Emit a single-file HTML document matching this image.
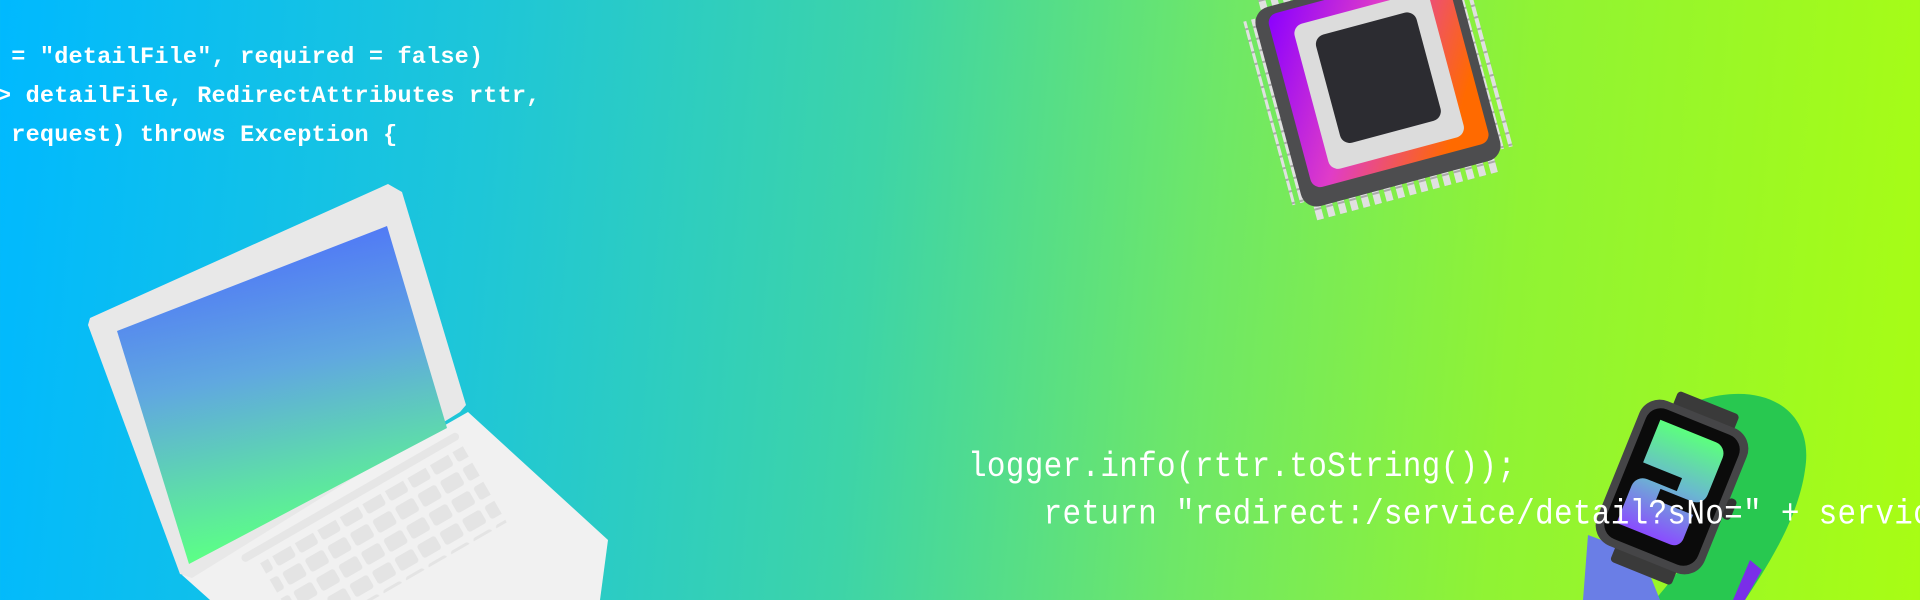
<!DOCTYPE html>
<html><head><meta charset="utf-8"><style>
html,body{margin:0;padding:0;overflow:hidden;width:1920px;height:600px}
body{position:relative;
background:linear-gradient(95deg,#00b9ff 0%,#1ec6d8 25%,#3dd4a8 45%,#6ee768 62%,#90f334 78%,#a8fd14 100%);}
.code{position:absolute;color:#fff;font-family:"Liberation Mono",monospace;white-space:pre;}
.top{font-weight:bold;font-size:23.5px;line-height:39px;left:-3px;top:38px;letter-spacing:0.2px}
.bot{font-size:31px;line-height:41px;left:968px;top:444px;transform:scaleY(1.15);transform-origin:0 0;letter-spacing:0.3px}
svg{position:absolute;left:0;top:0}
</style></head><body>
<svg width="1920" height="600" viewBox="0 0 1920 600">
<defs>
<linearGradient id="scr" x1="0" y1="0" x2="0.2" y2="1"><stop offset="0" stop-color="#4a66ff"/><stop offset="0.5" stop-color="#60a8e0"/><stop offset="1" stop-color="#5cff86"/></linearGradient>
<linearGradient id="chipc" x1="0" y1="0" x2="1" y2="0.6"><stop offset="0" stop-color="#8a00ff"/><stop offset="0.5" stop-color="#e03cc8"/><stop offset="1" stop-color="#ff6a00"/></linearGradient>
<linearGradient id="wscr" x1="0" y1="0" x2="0" y2="1"><stop offset="0" stop-color="#5cff7e"/><stop offset="0.5" stop-color="#6ab8d0"/><stop offset="1" stop-color="#8a4cff"/></linearGradient>
<pattern id="pins" width="12" height="12" patternUnits="userSpaceOnUse"><rect x="2" y="0" width="7" height="12" fill="#e0e0e0"/><rect x="2" y="8" width="7" height="2" fill="#aaa"/></pattern>
<pattern id="keys" width="26" height="22" patternUnits="userSpaceOnUse"><rect x="2" y="3" width="21" height="15" rx="3" fill="#e4e4e4"/></pattern>
</defs>
<!-- laptop base -->
<polygon points="182,575 468,412 608,540 600,600 210,600" fill="#f1f1f1"/>
<g transform="translate(245,565) rotate(-30)">
<rect x="0" y="-10" width="250" height="8" rx="4" fill="#e6e6e6"/>
<rect x="14" y="6" width="234" height="88" fill="url(#keys)"/>
</g>
<!-- laptop lid -->
<polygon points="90,318 388,184 402,192 466,405 460,412 192,578 180,574 88,325" fill="#e8e8e8"/>
<polygon points="117,331 387,226 447,428 189,564" fill="url(#scr)"/>
<!-- chip -->
<g transform="translate(1378,84) rotate(-15)">
<rect x="-114" y="-95" width="12" height="190" fill="url(#pins)"/>
<rect x="102" y="-95" width="12" height="190" fill="url(#pins)"/>
<rect x="-95" y="102" width="190" height="14" fill="url(#pins)"/>
<rect x="-95" y="-116" width="190" height="14" fill="url(#pins)"/>
<rect x="-103" y="-103" width="206" height="206" rx="16" fill="#4d4d4f"/>
<rect x="-90" y="-95" width="184" height="180" rx="10" fill="url(#chipc)"/>
<rect x="-68" y="-78" width="140" height="150" rx="10" fill="#dcdcdc"/>
<rect x="-50" y="-62" width="104" height="112" rx="10" fill="#2c2c31"/>
</g>
<!-- watch -->
<path d="M1700,400 C1765,380 1815,410 1805,470 C1798,520 1765,570 1745,600 L1655,600 C1705,540 1750,480 1720,430 Z" fill="#28c850"/>
<path d="M1588,535 L1642,555 L1660,600 L1583,600 Z" fill="#6a7ee6"/>
<path d="M1750,560 L1762,570 L1745,600 L1733,600 Z" fill="#7a2ee8"/>
<g transform="translate(1672,487) rotate(22)">
<rect x="-30" y="-92" width="66" height="18" rx="4" fill="#3a3a3a"/>
<rect x="-30" y="74" width="66" height="18" rx="4" fill="#3a3a3a"/>
<rect x="-58" y="-78" width="116" height="156" rx="22" fill="#454547"/>
<rect x="-50" y="-70" width="100" height="140" rx="16" fill="#0b0b0b"/>
<path d="M-36,-58 h60 a12,12 0 0 1 12,12 v40 a12,12 0 0 1 -12,12 h-34 v12 h40 v26 a10,10 0 0 1 -10,10 h-58 v-40 a12,12 0 0 1 12,-12 h32 v-14 h-42 z" fill="url(#wscr)"/>
<rect x="57" y="-12" width="9" height="22" rx="4" fill="#333"/>
</g>
</svg>
<div class="code top"> = "detailFile", required = false)
&gt; detailFile, RedirectAttributes rttr,
 request) throws Exception {</div>
<div class="code bot">logger.info(rttr.toString());
    return "redirect:/service/detail?sNo=" + service</div>
</body></html>
